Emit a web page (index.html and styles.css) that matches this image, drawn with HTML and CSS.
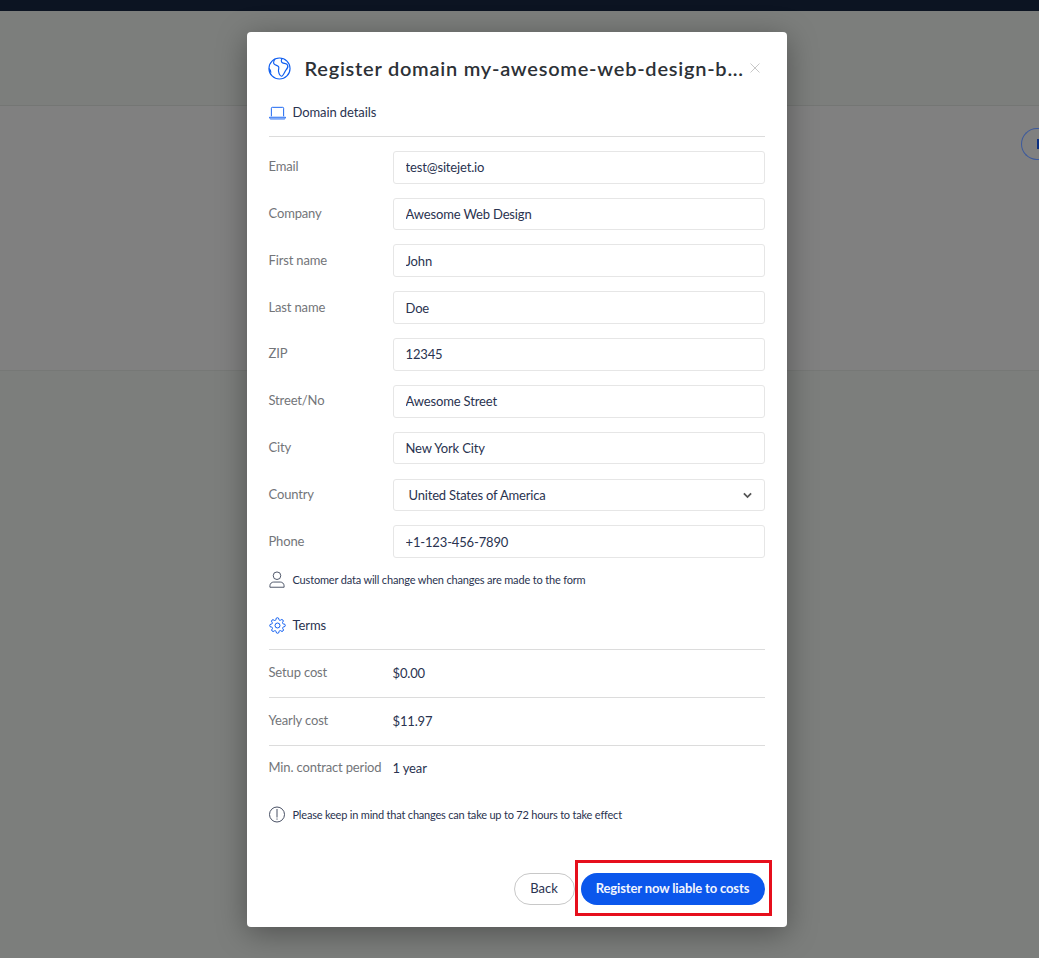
FILE: index.html
```html
<!DOCTYPE html>
<html lang="en">
<head>
<meta charset="utf-8">
<title>Register domain</title>
<link rel="stylesheet" href="styles.css">
</head>
<body>
<div class="page">
  <div class="topnav"></div>
  <div class="pagehead"></div>
  <div class="pagesection"><span class="pagebtn"><i class="pagebtn-mark"></i></span></div>
</div>
<div class="overlay">
  <section class="modal">
    <header class="modal-head">
      <svg class="globe" viewBox="0 0 24 24" fill="none" stroke="#0f5ef0" stroke-width="1.200"><circle cx="12" cy="12" r="11"/><path d="M7.500 1.800C6 4 5 6 6.500 7.500 8 9 10 8.500 11 10c1 1.500-.5 3 0 5 .5 3 2 5.500 3.500 5 2-1 2.500-4 4-6 1.500-1.500 3-3 2-5.500-1-2-4-1.500-5.500-2.500-1.500-1-1.500-3 0-4.500"/><path d="M1 12c1.500 1 2 2.500 2 4.500"/></svg>
      <h1 class="modal-title">Register domain my-awesome-web-design-b...</h1>
      <svg class="close" viewBox="0 0 10 10" fill="none" stroke="#c8c8c8" stroke-width="1"><path d="M.5.500l9 9M9.500.500l-9 9"/></svg>
    </header>

    <div class="section-head details-head">
      <svg class="sec-icon" viewBox="0 0 18 14" fill="none" stroke="#0f5ef0" stroke-width="1"><path d="M2.500 10.500V2a1 1 0 0 1 1-1h11a1 1 0 0 1 1 1v8.500"/><path d="M.5 11.500h17c0 1-.6 1.800-1.500 1.800H2c-.9 0-1.500-.8-1.500-1.800z"/></svg>
      <span>Domain details</span>
    </div>

    <form class="fields">
      <label class="field"><span class="field-label">Email</span><input class="input" value="test@sitejet.io"></label>
      <label class="field"><span class="field-label">Company</span><input class="input" value="Awesome Web Design"></label>
      <label class="field"><span class="field-label">First name</span><input class="input" value="John"></label>
      <label class="field"><span class="field-label">Last name</span><input class="input" value="Doe"></label>
      <label class="field"><span class="field-label">ZIP</span><input class="input" value="12345"></label>
      <label class="field"><span class="field-label">Street/No</span><input class="input" value="Awesome Street"></label>
      <label class="field"><span class="field-label">City</span><input class="input" value="New York City"></label>
      <div class="field"><span class="field-label">Country</span>
        <div class="input select"><span>United States of America</span>
          <svg class="chevron" viewBox="0 0 10 7" fill="none" stroke="#555" stroke-width="2"><path d="M1 1.200l4 4 4-4"/></svg>
        </div>
      </div>
      <label class="field"><span class="field-label">Phone</span><input class="input" value="+1-123-456-7890"></label>
    </form>

    <div class="note note-customer">
      <svg class="note-icon" viewBox="0 0 16 18" fill="none" stroke="#333c52" stroke-width="0.9"><circle cx="8" cy="5" r="4"/><path d="M.5 17.200v-1.500c0-2.500 2-4 4-4h7c2 0 4 1.500 4 4v1.500z"/></svg>
      <span>Customer data will change when changes are made to the form</span>
    </div>

    <div class="section-head terms-head">
      <svg class="gear" viewBox="0 0 24 24" fill="none" stroke="#0f5ef0" stroke-width="1.400"><circle cx="12" cy="12" r="3.500"/><path d="M19.400 15a1.650 1.650 0 0 0 .33 1.820l.06.06a2 2 0 1 1-2.830 2.830l-.06-.06a1.650 1.650 0 0 0-2.800 1.150V21a2 2 0 0 1-4 0v-.09a1.650 1.650 0 0 0-2.800-1.150l-.06.06a2 2 0 1 1-2.830-2.830l.06-.06a1.650 1.650 0 0 0-1.150-2.800H3a2 2 0 0 1 0-4h.09a1.650 1.650 0 0 0 1.150-2.800l-.06-.06a2 2 0 1 1 2.830-2.830l.06.06a1.650 1.650 0 0 0 2.800-1.150V3a2 2 0 0 1 4 0v.09a1.650 1.650 0 0 0 2.800 1.150l.06-.06a2 2 0 1 1 2.830 2.830l-.06.06a1.650 1.650 0 0 0 1.150 2.800H21a2 2 0 0 1 0 4h-.09a1.650 1.650 0 0 0-1.510 1.130z"/></svg>
      <span>Terms</span>
    </div>

    <div class="terms">
      <div class="term"><span class="field-label">Setup cost</span><span>$0.00</span></div>
      <div class="term"><span class="field-label">Yearly cost</span><span>$11.97</span></div>
      <div class="term"><span class="field-label">Min. contract period</span><span>1 year</span></div>
    </div>

    <div class="note note-info">
      <svg class="note-icon" viewBox="0 0 16 16" fill="none" stroke="#333c52" stroke-width="0.9"><circle cx="8" cy="8" r="7.500"/><path d="M8 2.500v8.500M8 12v1.200"/></svg>
      <span>Please keep in mind that changes can take up to 72 hours to take effect</span>
    </div>

    <footer class="actions">
      <button class="btn btn-back" type="button">Back</button>
      <button class="btn btn-primary" type="button">Register now liable to costs</button>
    </footer>
    <div class="highlight"></div>
  </section>
</div>
</body>
</html>
```

FILE: styles.css
```css
* { box-sizing: border-box; }
html, body { margin: 0; height: 100%; }
body {
  background: #7c7e7c;
  font-family: "Lato", "Liberation Sans", sans-serif;
  color: #2a3350;
  overflow: hidden;
}
.page { height: 958px; }
.topnav { height: 11px; background: #0c1422; }
.pagehead { height: 95px; background: #7c7e7c; border-bottom: 1px solid #747674; }
.pagesection {
  height: 265px;
  background: #808080;
  border-bottom: 1px solid #767876;
  display: flex;
  justify-content: flex-end;
  padding-top: 22px;
}
.pagebtn {
  width: 18px;
  height: 32px;
  border: 1px solid #3d5a9c;
  border-right: 0;
  border-radius: 16px 0 0 16px;
  display: flex;
  justify-content: flex-end;
  align-items: center;
}
.pagebtn-mark { width: 2px; height: 10px; background: #0c2f80; }

.overlay {
  position: absolute;
  inset: 0;
  display: flex;
  justify-content: center;
  align-items: flex-start;
  padding: 32px 6px 0 0;
}
.modal {
  position: relative;
  width: 540px;
  height: 895px;
  background: #fff;
  border-radius: 4px;
  padding: 0 22px;
  box-shadow: 0 6px 30px rgba(0, 0, 0, 0.35);
}
.modal-head {
  display: flex;
  align-items: center;
  height: 72px;
}
.globe { width: 23px; height: 23px; flex: none; margin: 0 14px 0 -1px; }
.modal-title {
  margin: 0;
  font-size: 20px;
  font-weight: 600;
  color: #2d3136;
  letter-spacing: 0.75px;
  white-space: nowrap;
  flex: 1;
  min-width: 0;
}
.close { width: 10px; height: 10px; flex: none; margin: 0 5px 0 0; }

.section-head {
  display: flex;
  align-items: center;
  gap: 7px;
  font-size: 13px;
  letter-spacing: -0.1px;
  border-bottom: 1px solid #dcdcdc;
}
.details-head { height: 33px; padding-bottom: 17px; }
.sec-icon { width: 17px; height: 14px; flex: none; margin-top: 2px; }
.gear { width: 17px; height: 17px; flex: none; }
.fields { padding-top: 13.800px; }
.field {
  display: flex;
  align-items: center;
  height: 32.800px;
  margin-bottom: 14px;
  font-size: 13px;
  letter-spacing: -0.15px;
}
.field-label { width: 124px; flex: none; color: #737579; margin-top: -2px; }
.input {
  width: 372px;
  height: 100%;
  border: 1px solid #e6e6e6;
  border-radius: 3px;
  padding: 0 12px;
  font: inherit;
  letter-spacing: inherit;
  color: #2a3350;
  background: #fff;
}
.select {
  display: flex;
  align-items: center;
  justify-content: space-between;
  height: 32px;
  margin-top: 1px;
  padding: 0 12px 0 15px;
  letter-spacing: -0.18px;
}
.chevron { width: 9px; height: 7px; }

.note {
  display: flex;
  align-items: center;
  font-size: 11px;
  letter-spacing: -0.2px;
  color: #2a3350;
}
.note-icon { width: 16px; height: 17px; flex: none; margin-right: 8px; }
.note-customer { height: 18px; margin-top: -1px; letter-spacing: -0.17px; }
.terms-head { margin-top: 19px; height: 42px; padding-bottom: 6px; }
.term {
  display: flex;
  align-items: center;
  height: 48px;
  font-size: 13px;
  letter-spacing: -0.15px;
  border-bottom: 1px solid #dcdcdc;
}
.term:last-child { border-bottom: 0; height: 45px; }
.note-info { margin-top: 15px; height: 18px; }

.actions {
  position: absolute;
  left: 22px;
  right: 22px;
  bottom: 22px;
  display: flex;
  justify-content: flex-end;
  gap: 6px;
}
.btn {
  height: 32px;
  border-radius: 16px;
  font-family: inherit;
  font-size: 13px;
  padding: 0 0 2px;
}
.btn-back { width: 61px; border: 1px solid #c8c8c8; background: #fff; color: #2a3350; }
.btn-primary { width: 184px; border: 0; background: #0b57ec; color: #f2f5fe; font-weight: 700; letter-spacing: -0.14px; }
.highlight {
  position: absolute;
  left: 328px;
  top: 828px;
  width: 197px;
  height: 56px;
  border: 3px solid #e60f1c;
}
```
